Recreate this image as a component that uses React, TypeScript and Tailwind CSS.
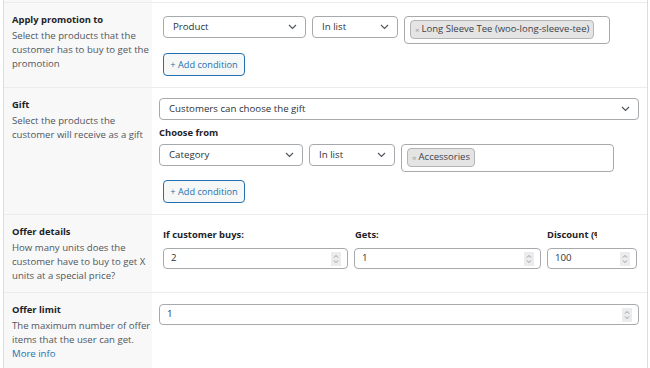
import { ReactNode } from "react";

const FONT = { fontFamily: '"Open Sans", "Noto Sans", sans-serif' };

function Chevron() {
  return (
    <svg width="9" height="6" viewBox="0 0 9 6" className="shrink-0">
      <path d="M1 1l3.5 3.5L8 1" fill="none" stroke="#50575e" strokeWidth="1.2" />
    </svg>
  );
}

function Select({ label, className }: { label: string; className: string }) {
  return (
    <div
      className={`flex h-[22px] items-center justify-between rounded-[4px] border border-[#a7aaad] bg-white pl-[9px] pr-[8px] text-[9.7px] text-[#2c3338] ${className}`}
    >
      <span>{label}</span>
      <Chevron />
    </div>
  );
}

function Tag({ label }: { label: string }) {
  return (
    <span className="flex h-[19px] items-center gap-[2px] whitespace-nowrap rounded-[4px] border border-[#b4b4b4] bg-[#e4e4e4] px-[4px] text-[9.5px] text-[#3c434a]">
      <span className="text-[8px] text-[#999]">×</span>
      {label}
    </span>
  );
}

function MultiSelect({ tag, className }: { tag: string; className: string }) {
  return (
    <div
      className={`flex h-[28px] items-start rounded-[4px] border border-[#a7aaad] bg-white px-[5px] pt-[3px] ${className}`}
    >
      <Tag label={tag} />
    </div>
  );
}

function Spinner() {
  return (
    <span className="flex h-[14px] w-[10px] flex-col items-center justify-center bg-[#ececec]">
      <svg width="6" height="10" viewBox="0 0 6 10">
        <path d="M1 3.5l2-2 2 2M1 6.5l2 2 2-2" fill="none" stroke="#8c8f94" strokeWidth="0.9" />
      </svg>
    </span>
  );
}

function NumberInput({ value, className }: { value: string; className: string }) {
  return (
    <div
      className={`flex h-[21px] items-center justify-between rounded-[4px] border border-[#a7aaad] bg-white pl-[7px] pr-[6px] text-[9.7px] text-[#2c3338] ${className}`}
    >
      <span>{value}</span>
      <Spinner />
    </div>
  );
}

function AddCondition() {
  return (
    <button className="flex h-[23px] w-[82px] items-center justify-center rounded-[4px] border border-[#2271b1] bg-[#f6f7f7] text-[9.2px] text-[#2271b1]">
      + Add condition
    </button>
  );
}

function Row({ title, children, desc }: { title: string; desc: ReactNode; children: ReactNode }) {
  return (
    <div className="grid grid-cols-[148px_1fr] border-b border-[#ececec]">
      <div className="bg-[#f8f8f8] pl-[8px] pr-[1px] pt-[10px] pb-[9px]">
        <div className="text-[9.4px] font-bold leading-[14px] text-[#1d2327]">{title}</div>
        <div className="mt-[2px] text-[9.6px] leading-[14px] text-[#50575e]">{desc}</div>
      </div>
      <div className="bg-white">{children}</div>
    </div>
  );
}

export default function App() {
  return (
    <div className="h-[368px] w-[650px] overflow-hidden bg-white" style={FONT}>
      <div className="ml-[3px] mr-[2px] h-full border-x border-[#dcdcde]">
        <div className="grid h-[3px] grid-cols-[148px_1fr] border-b border-[#ececec]">
          <div className="bg-[#f8f8f8]" />
          <div />
        </div>

        <Row
          title="Apply promotion to"
          desc="Select the products that the customer has to buy to get the promotion"
        >
          <div className="pl-[11px] pt-[13px] pb-[11px]">
            <div className="flex items-start gap-[6px]">
              <Select label="Product" className="w-[143px]" />
              <Select label="In list" className="w-[86px]" />
              <MultiSelect tag="Long Sleeve Tee (woo-long-sleeve-tee)" className="w-[206px]" />
            </div>
            <div className="mt-[9px]">
              <AddCondition />
            </div>
          </div>
        </Row>

        <Row title="Gift" desc="Select the products the customer will receive as a gift">
          <div className="pl-[7px] pr-[8px] pt-[10px] pb-[11px]">
            <Select label="Customers can choose the gift" className="w-full" />
            <div className="mt-[6px] text-[9.4px] font-bold leading-[14px] text-[#1d2327]">
              Choose from
            </div>
            <div className="mt-[4px] flex items-start gap-[6px]">
              <Select label="Category" className="w-[144px]" />
              <Select label="In list" className="w-[86px]" />
              <MultiSelect tag="Accessories" className="w-[213px]" />
            </div>
            <div className="ml-[4px] mt-[8px]">
              <AddCondition />
            </div>
          </div>
        </Row>

        <Row
          title="Offer details"
          desc="How many units does the customer have to buy to get X units at a special price?"
        >
          <div className="flex gap-[6px] pl-[11px] pt-[13px] pb-[22px]">
            <div className="w-[185px]">
              <div className="text-[9.4px] font-bold leading-[14px] text-[#1d2327]">If customer buys:</div>
              <NumberInput value="2" className="mt-[6px] w-full" />
            </div>
            <div className="w-[187px]">
              <div className="pl-[1px] text-[9.4px] font-bold leading-[14px] text-[#1d2327]">Gets:</div>
              <NumberInput value="1" className="mt-[6px] w-full" />
            </div>
            <div className="w-[90px]">
              <div className="w-[50px] overflow-hidden whitespace-nowrap text-[9.4px] font-bold leading-[14px] text-[#1d2327]">
                Discount (%)
              </div>
              <NumberInput value="100" className="mt-[6px] w-full" />
            </div>
          </div>
        </Row>

        <Row
          title="Offer limit"
          desc={
            <>
              <div>The maximum number of offer items that the user can get.</div>
              <div className="text-[#2271b1]">More info</div>
            </>
          }
        >
          <div className="pl-[7px] pr-[8px] pt-[11px]">
            <NumberInput value="1" className="w-full" />
          </div>
        </Row>
      </div>
    </div>
  );
}
